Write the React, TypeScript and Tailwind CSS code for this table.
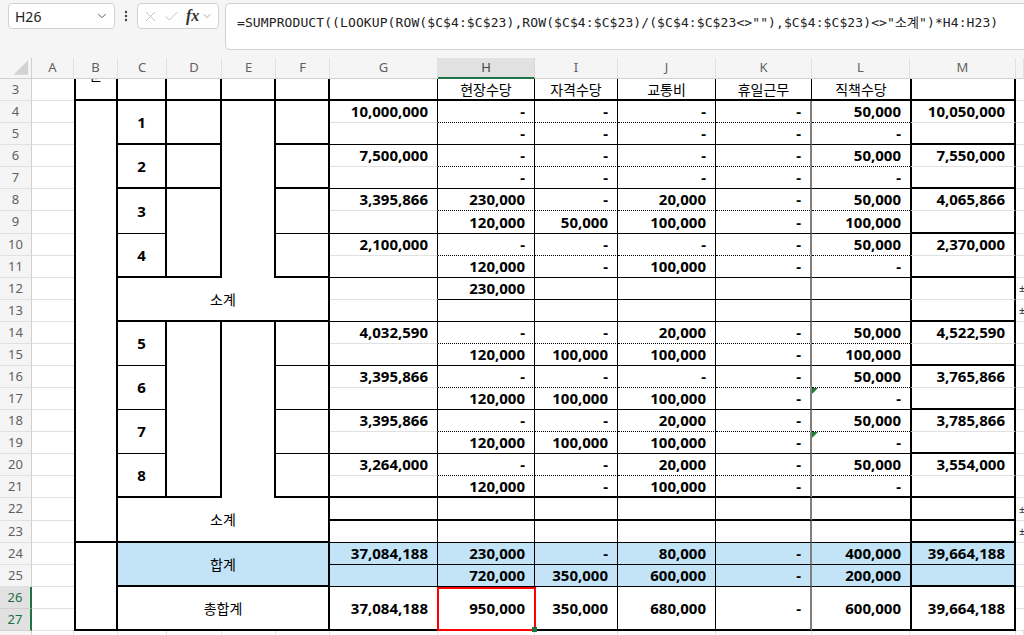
import { Fragment, type ReactNode } from "react";
import { Check, ChevronDown, X } from "lucide-react";

// ---------------------------------------------------------------------------
// Border and cell class constants
// ---------------------------------------------------------------------------

const GRID_B = "border-b border-b-[#e1e1e1]";
const THIN_B = "border-b border-b-black";
const THICK_B = "border-b-2 border-b-black";
const DOT_B = "border-b border-b-black [border-bottom-style:dotted]!";
const THIN_R = "border-r border-r-black";
const THICK_R = "border-r-2 border-r-black";
const GRAY_R = "border-r-2 border-r-[#7f7f7f]";
const BOX_X = "border-x-2 border-x-black";
const BLUE = "bg-[#c2e4f6]";
const NUM = "justify-end pr-[9px] font-bold text-[15px]";
const KOR = "justify-center text-[14px]";

type Kind = "top" | "bot" | "end" | "s1" | "s2" | "t1" | "t2" | "b1" | "b2" | "tot";

// right borders for G..M
const COL_R = [THIN_R, THIN_R, THIN_R, THIN_R, GRAY_R, "", BOX_X];

// bottom borders for G..M per row kind
const BOTTOMS: Record<Kind, string[]> = {
  top: [GRID_B, DOT_B, DOT_B, DOT_B, DOT_B, DOT_B, GRID_B],
  bot: [THIN_B, THIN_B, THIN_B, THIN_B, THIN_B, THIN_B, THICK_B],
  end: [THICK_B, THICK_B, THICK_B, THICK_B, THICK_B, THICK_B, THICK_B],
  s1: [GRID_B, THIN_B, THIN_B, THIN_B, THIN_B, THIN_B, GRID_B],
  s2: [THIN_B, THIN_B, THIN_B, THIN_B, THIN_B, THIN_B, THICK_B],
  t1: [THICK_B, THICK_B, THICK_B, THICK_B, THICK_B, THICK_B, THICK_B],
  t2: [THIN_B, THIN_B, THIN_B, THIN_B, THIN_B, THIN_B, THICK_B],
  b1: [THIN_B, THIN_B, THIN_B, THIN_B, THIN_B, THIN_B, THIN_B],
  b2: [THIN_B, THIN_B, THIN_B, THIN_B, THIN_B, THIN_B, THICK_B],
  tot: [THICK_B, THICK_B, THICK_B, THICK_B, THICK_B, THICK_B, THICK_B],
};

const COLS = ["A", "B", "C", "D", "E", "F", "G", "H", "I", "J", "K", "L", "M", ""];

function Cell({ c, children }: { c: string; children?: ReactNode }) {
  return <div className={`flex items-center whitespace-nowrap ${c}`}>{children}</div>;
}

// little green "error" triangle in a cell corner
function Tri() {
  return (
    <span className="absolute left-0 top-0 h-0 w-0 border-t-[6px] border-r-[6px] border-t-[#1e7b34] border-r-transparent" />
  );
}

// red selection frame around H26
function Sel() {
  return (
    <span className="absolute -bottom-[2px] -left-[1px] -right-[2px] top-0 z-10 border-2 border-[#ff0000]">
      <span className="absolute -bottom-[3px] -right-[3px] h-[5px] w-[5px] bg-[#1e7145]" />
    </span>
  );
}

// ---------------------------------------------------------------------------
// Row builders
// ---------------------------------------------------------------------------

function rowHead(n: number, label = true) {
  const sel = n === 26 || n === 27;
  return (
    <Cell
      c={
        sel
          ? "justify-center border-r-2 border-b border-r-[#1f7244] border-b-[#d0d0d0] bg-[#e1e1e1] text-[13px] text-[#1f6e43]"
          : "justify-center border-r border-b border-r-[#d0d0d0] border-b-[#e1e1e1] bg-[#f5f5f5] text-[13px] text-[#616161]"
      }
    >
      {label ? n : null}
    </Cell>
  );
}

function colA() {
  return <Cell c={GRID_B} />;
}

function colN(glyph = false) {
  return (
    <Cell c={`${GRID_B} overflow-hidden pl-[3px] text-[11px] text-[#333]`}>{glyph ? "±" : null}</Cell>
  );
}

function vals(v: string[], kind: Kind, opts: { tri?: boolean; sel?: boolean } = {}) {
  const blue = kind === "b1" || kind === "b2";
  return v.map((t, i) => (
    <Cell
      key={i}
      c={`relative ${COL_R[i]} ${BOTTOMS[kind][i]} ${blue ? BLUE : ""} ${kind === "tot" ? "row-span-2" : ""} ${NUM}`}
    >
      {opts.tri && i === 5 ? <Tri /> : null}
      {opts.sel && i === 1 ? <Sel /> : null}
      {t}
    </Cell>
  ));
}

// C column number cell (2 rows)
function num(n: string, bottom: string) {
  return <Cell c={`row-span-2 justify-center font-bold text-[15px] ${THICK_R} ${bottom}`}>{n}</Cell>;
}

function box(span: string, bottom: string) {
  return <Cell c={`${span} ${THICK_R} ${bottom}`} />;
}

function merged(label: string, extra = "") {
  return (
    <Cell c={`col-span-4 row-span-2 ${KOR} ${THICK_R} ${THICK_B} ${extra}`}>{label}</Cell>
  );
}

// ---------------------------------------------------------------------------
// Page
// ---------------------------------------------------------------------------

export default function App() {
  const cells: ReactNode[] = [];
  const push = (...items: ReactNode[]) => cells.push(...items);

  // column header row
  push(
    <div className="flex items-end justify-end border-r border-b border-r-[#d0d0d0] border-b-[#d0d0d0] bg-[#f5f5f5]">
      <svg width="32" height="21" viewBox="0 0 32 21">
        <polygon points="29,3 29,18 14,18" fill="#d2d2d2" />
      </svg>
    </div>,
  );
  COLS.forEach((l) =>
    push(
      l === "H" ? (
        <Cell c="justify-center border-r border-b-2 border-r-[#d6d6d6] border-b-[#1f7244] bg-[#e1e1e1] text-[13px] text-[#444]">
          {l}
        </Cell>
      ) : (
        <Cell c="justify-center border-r border-b border-r-[#e1e1e1] border-b-[#d0d0d0] bg-[#f5f5f5] text-[13px] text-[#616161]">
          {l}
        </Cell>
      ),
    ),
  );

  // row 3 : titles
  push(
    rowHead(3),
    colA(),
    <Cell c={`items-start justify-center overflow-hidden border-l-2 border-l-black ${THICK_R} ${THICK_B}`}>
      <span className="-mt-[13px] text-[14px] leading-[18px]">분</span>
    </Cell>,
    <Cell c={`${THICK_R} ${THICK_B}`} />,
    <Cell c={`${THICK_R} ${THICK_B}`} />,
    <Cell c={`${THICK_R} ${THICK_B}`} />,
    <Cell c={`${THICK_R} ${THICK_B}`} />,
    <Cell c={`${THIN_R} ${THICK_B}`} />,
    <Cell c={`${KOR} ${THIN_R} ${THICK_B}`}>현장수당</Cell>,
    <Cell c={`${KOR} ${THIN_R} ${THICK_B}`}>자격수당</Cell>,
    <Cell c={`${KOR} ${THIN_R} ${THICK_B}`}>교통비</Cell>,
    <Cell c={`${KOR} ${THIN_R} ${THICK_B}`}>휴일근무</Cell>,
    <Cell c={`${KOR} ${THICK_B}`}>직책수당</Cell>,
    <Cell c={`${BOX_X} ${THICK_B}`} />,
    colN(),
  );

  // rows 4-11
  push(
    rowHead(4),
    colA(),
    <Cell c={`row-span-20 border-l-2 border-l-black ${THICK_R} ${THICK_B}`} />,
    num("1", THICK_B),
    box("row-span-2", THICK_B),
    box("row-span-8", ""),
    box("row-span-2", THICK_B),
    ...vals(["10,000,000", "-", "-", "-", "-", "50,000", "10,050,000"], "top"),
    colN(),
  );
  push(rowHead(5), colA(), ...vals(["", "-", "-", "-", "-", "-", ""], "bot"), colN());
  push(
    rowHead(6),
    colA(),
    num("2", THICK_B),
    box("row-span-2", THICK_B),
    box("row-span-2", THICK_B),
    ...vals(["7,500,000", "-", "-", "-", "-", "50,000", "7,550,000"], "top"),
    colN(),
  );
  push(rowHead(7), colA(), ...vals(["", "-", "-", "-", "-", "-", ""], "bot"), colN());
  push(
    rowHead(8),
    colA(),
    num("3", THIN_B),
    box("row-span-4", THICK_B),
    box("row-span-2", THIN_B),
    ...vals(["3,395,866", "230,000", "-", "20,000", "-", "50,000", "4,065,866"], "top"),
    colN(),
  );
  push(rowHead(9), colA(), ...vals(["", "120,000", "50,000", "100,000", "-", "100,000", ""], "bot"), colN());
  push(
    rowHead(10),
    colA(),
    num("4", THICK_B),
    box("row-span-2", THICK_B),
    ...vals(["2,100,000", "-", "-", "-", "-", "50,000", "2,370,000"], "top"),
    colN(),
  );
  push(rowHead(11), colA(), ...vals(["", "120,000", "-", "100,000", "-", "-", ""], "bot"), colN());

  // rows 12-13 : first subtotal
  push(rowHead(12), colA(), merged("소계"), ...vals(["", "230,000", "", "", "", "", ""], "s1"), colN(true));
  push(rowHead(13), colA(), ...vals(["", "", "", "", "", "", ""], "s2"), colN(true));

  // rows 14-21
  push(
    rowHead(14),
    colA(),
    num("5", THIN_B),
    box("row-span-8", THICK_B),
    box("row-span-8", ""),
    box("row-span-2", THIN_B),
    ...vals(["4,032,590", "-", "-", "20,000", "-", "50,000", "4,522,590"], "top"),
    colN(),
  );
  push(rowHead(15), colA(), ...vals(["", "120,000", "100,000", "100,000", "-", "100,000", ""], "bot"), colN());
  push(
    rowHead(16),
    colA(),
    num("6", THIN_B),
    box("row-span-2", THIN_B),
    ...vals(["3,395,866", "-", "-", "-", "-", "50,000", "3,765,866"], "top"),
    colN(),
  );
  push(
    rowHead(17),
    colA(),
    ...vals(["", "120,000", "100,000", "100,000", "-", "-", ""], "bot", { tri: true }),
    colN(),
  );
  push(
    rowHead(18),
    colA(),
    num("7", THIN_B),
    box("row-span-2", THIN_B),
    ...vals(["3,395,866", "-", "-", "20,000", "-", "50,000", "3,785,866"], "top"),
    colN(),
  );
  push(
    rowHead(19),
    colA(),
    ...vals(["", "120,000", "100,000", "100,000", "-", "-", ""], "bot", { tri: true }),
    colN(),
  );
  push(
    rowHead(20),
    colA(),
    num("8", THICK_B),
    box("row-span-2", THICK_B),
    ...vals(["3,264,000", "-", "-", "20,000", "-", "50,000", "3,554,000"], "top"),
    colN(),
  );
  push(rowHead(21), colA(), ...vals(["", "120,000", "-", "100,000", "-", "-", ""], "end"), colN());

  // rows 22-23 : second subtotal
  push(rowHead(22), colA(), merged("소계"), ...vals(["", "", "", "", "", "", ""], "t1"), colN(true));
  push(rowHead(23), colA(), ...vals(["", "", "", "", "", "", ""], "t2"), colN(true));

  // rows 24-25 : 합계
  push(
    rowHead(24),
    colA(),
    <Cell c={`row-span-4 border-l-2 border-l-black ${THICK_R} ${THICK_B}`} />,
    merged("합계", BLUE),
    ...vals(["37,084,188", "230,000", "-", "80,000", "-", "400,000", "39,664,188"], "b1"),
    colN(),
  );
  push(rowHead(25), colA(), ...vals(["", "720,000", "350,000", "600,000", "-", "200,000", ""], "b2"), colN());

  // rows 26-27 : 총합계
  push(
    rowHead(26),
    colA(),
    merged("총합계"),
    ...vals(["37,084,188", "950,000", "350,000", "680,000", "-", "600,000", "39,664,188"], "tot", { sel: true }),
    colN(),
  );
  push(rowHead(27), colA(), colN());

  // row 28 (cut off by the window)
  push(rowHead(28, false));
  COLS.forEach(() => push(<Cell c={`border-r border-r-[#e1e1e1] ${GRID_B}`} />));

  return (
    <div className="h-[635px] w-[1024px] overflow-hidden bg-white font-['Noto_Sans','Noto_Sans_CJK_KR',sans-serif] text-black">
      {/* Formula bar */}
      <div className="flex h-[58px] items-start bg-[#f5f5f5] pt-[3px]">
        <div className="ml-[8px] flex h-[26px] w-[107px] items-center justify-between rounded-[4px] border border-[#d1d1d1] bg-white pl-[6px] pr-[5px]">
          <span className="text-[14px] text-[#222]">H26</span>
          <ChevronDown size={14} strokeWidth={1.6} className="text-[#555]" />
        </div>
        <div className="flex h-[26px] w-[22px] items-center justify-center">
          <svg width="4" height="12" viewBox="0 0 4 12">
            <circle cx="2" cy="2" r="1.2" fill="#444" />
            <circle cx="2" cy="6" r="1.2" fill="#444" />
            <circle cx="2" cy="10" r="1.2" fill="#444" />
          </svg>
        </div>
        <div className="flex h-[26px] w-[82px] items-center rounded-[4px] border border-[#d1d1d1] bg-white pl-[4px]">
          <X size={17} strokeWidth={1.3} className="text-[#bdbdbd]" />
          <Check size={17} strokeWidth={1.3} className="ml-[4px] text-[#bdbdbd]" />
          <span className="ml-[6px] font-['Liberation_Serif',serif] text-[16px] font-bold italic text-[#333]">fx</span>
          <ChevronDown size={12} strokeWidth={1.4} className="ml-[2px] text-[#888]" />
        </div>
        <div className="ml-[6px] h-[47px] flex-1 rounded-l-[5px] border border-r-0 border-[#d1d1d1] bg-white pl-[11px] pt-[5px]">
          <span className="font-['DejaVu_Sans_Mono','Noto_Sans_CJK_KR',monospace] text-[13px] tracking-[0.1px] text-[#222]">
            =SUMPRODUCT((LOOKUP(ROW($C$4:$C$23),ROW($C$4:$C$23)/($C$4:$C$23&lt;&gt;""),$C$4:$C$23)&lt;&gt;"소계")*H4:H23)
          </span>
        </div>
      </div>

      {/* Sheet */}
      <div className="grid grid-cols-[32px_42px_44px_49px_55px_54px_54px_108px_97px_83px_98px_96px_98px_106px_8px] grid-rows-[21px_22px_repeat(5,22px)_23px_repeat(12,22px)_23px_22px_repeat(5,22px)]">
        {cells.map((c, i) => (
          <Fragment key={i}>{c}</Fragment>
        ))}
      </div>
    </div>
  );
}
